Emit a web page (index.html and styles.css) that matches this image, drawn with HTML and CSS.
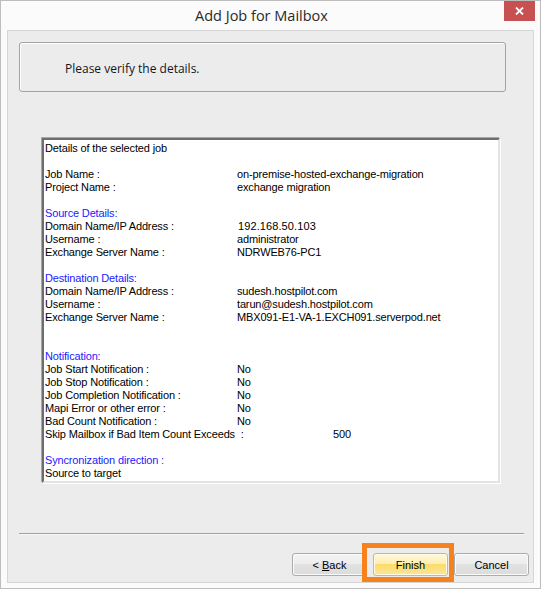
FILE: index.html
```html
<!DOCTYPE html>
<html>
<head>
<meta charset="utf-8">
<link rel="stylesheet" href="styles.css">
</head>
<body>
<div class="window">
  <div class="titlebar">
    <div class="title">Add Job for Mailbox</div>
    <div class="close">
      <svg width="9" height="8" viewBox="0 0 9 8"><path d="M1 0.5 L8 7.5 M8 0.5 L1 7.5" stroke="#fff" stroke-width="1.8" fill="none"/></svg>
    </div>
  </div>
  <div class="panel">
    <div class="header">Please verify the details.</div>
    <div class="details">
      <div class="line">Details of the selected job</div>
      <div class="line"></div>
      <div class="row"><span>Job Name :</span><span>on-premise-hosted-exchange-migration</span></div>
      <div class="row"><span>Project Name :</span><span>exchange migration</span></div>
      <div class="line"></div>
      <div class="line blue">Source Details:</div>
      <div class="row"><span>Domain Name/IP Address :</span><span class="ip">192.168.50.103</span></div>
      <div class="row"><span>Username :</span><span>administrator</span></div>
      <div class="row"><span>Exchange Server Name :</span><span>NDRWEB76-PC1</span></div>
      <div class="line"></div>
      <div class="line blue">Destination Details:</div>
      <div class="row"><span>Domain Name/IP Address :</span><span>sudesh.hostpilot.com</span></div>
      <div class="row"><span>Username :</span><span>tarun@sudesh.hostpilot.com</span></div>
      <div class="row"><span>Exchange Server Name :</span><span>MBX091-E1-VA-1.EXCH091.serverpod.net</span></div>
      <div class="line"></div>
      <div class="line"></div>
      <div class="line blue">Notification:</div>
      <div class="row"><span>Job Start Notification :</span><span>No</span></div>
      <div class="row"><span>Job Stop Notification :</span><span>No</span></div>
      <div class="row"><span>Job Completion Notification :</span><span>No</span></div>
      <div class="row"><span>Mapi Error or other error :</span><span>No</span></div>
      <div class="row"><span>Bad Count Notification :</span><span>No</span></div>
      <div class="row wide"><span>Skip Mailbox if Bad Item Count Exceeds&nbsp;&nbsp;:</span><span>500</span></div>
      <div class="line"></div>
      <div class="line blue">Syncronization direction :</div>
      <div class="line">Source to target</div>
    </div>
    <div class="separator"></div>
    <div class="buttons">
      <button class="btn back">&lt; <u>B</u>ack</button>
      <button class="btn finish">Finish<span class="highlight"></span></button>
      <button class="btn cancel">Cancel</button>
    </div>
  </div>
</div>
</body>
</html>
```

FILE: styles.css
```css
html, body {
  margin: 0;
  padding: 0;
  background: #fbfbfb;
}
.window {
  width: 541px;
  height: 589px;
  box-sizing: border-box;
  border: 1px solid #bdbdbd;
  background: #fbfbfb;
  display: flex;
  flex-direction: column;
}
.titlebar {
  height: 29px;
  display: flex;
  align-items: flex-start;
}
.title {
  flex: 1;
  text-align: center;
  padding-left: 18px;
  padding-top: 5px;
  font-family: "Open Sans", "Noto Sans", sans-serif;
  font-size: 14.5px;
  line-height: 20px;
  color: #2a2a2a;
}
.close {
  width: 31px;
  height: 20px;
  margin-right: 5px;
  background: #c75050;
  display: flex;
  align-items: center;
  justify-content: center;
}
.panel {
  margin: 0 6px 5px 6px;
  border: 1px solid #d6d6d6;
  background: #ececec;
  flex: 1;
  display: flex;
  flex-direction: column;
}
.header {
  margin: 11px 0 0 11px;
  width: 487px;
  height: 50px;
  box-sizing: border-box;
  border: 1px solid #a3a3a3;
  border-radius: 3px;
  box-shadow: inset 1px 1px 0 #ffffff;
  padding-left: 45px;
  display: flex;
  align-items: center;
  font-family: "Open Sans", "Noto Sans", sans-serif;
  font-size: 12px;
  color: #14141e;
  padding-top: 2px;
}
.details {
  margin: 46px 0 0 34px;
  width: 458px;
  height: 345px;
  box-sizing: border-box;
  background: #ffffff;
  border-top: 2px solid #6d6d6d;
  border-left: 2px solid #6d6d6d;
  border-right: 2px solid #e3e3e3;
  border-bottom: 2px solid #e3e3e3;
  box-shadow: -1px -1px 0 #a8a8a8, 1px 1px 0 #ffffff;
  padding: 2px 0 0 1px;
  font-family: "Liberation Sans", Arial, sans-serif;
  font-size: 11px;
  letter-spacing: -0.15px;
  line-height: 13px;
  color: #000;
}
.line {
  height: 13px;
  white-space: nowrap;
}
.blue {
  color: #1a1aff;
}
.row {
  height: 13px;
  display: grid;
  grid-template-columns: 192px auto;
  white-space: nowrap;
}
.row.wide {
  grid-template-columns: 288px auto;
}
.ip {
  padding-left: 1px;
  letter-spacing: 0.1px;
}
.separator {
  margin: 50px 0 0 11px;
  width: 505px;
  height: 1px;
  background: #a0a0a0;
  box-shadow: 0 1px 0 #f8f8f8;
}
.buttons {
  margin-top: 19px;
  display: flex;
  justify-content: flex-end;
  gap: 6px;
  padding-right: 4px;
}
.btn {
  position: relative;
  width: 75px;
  height: 23px;
  box-sizing: border-box;
  border: 1px solid #acacac;
  border-radius: 3px;
  background: linear-gradient(#f4f4f4 0%, #ececec 50%, #e1e1e1 50%, #dcdcdc 100%);
  box-shadow: inset 0 0 0 1px #fbfbfb;
  font-family: "Liberation Sans", Arial, sans-serif;
  font-size: 11px;
  color: #000;
  padding: 0;
  margin: 0;
}
.btn u {
  text-decoration: underline;
}
.finish {
  border-color: #d9b95a;
  background: linear-gradient(#fff8d8 0%, #fdeeb0 50%, #fbdc6c 50%, #fde596 100%);
  box-shadow: inset 0 0 0 1px #fffbe8;
}
.highlight {
  position: absolute;
  left: -12px;
  top: -11px;
  width: 92px;
  height: 39px;
  box-sizing: border-box;
  border: 5px solid #f5821f;
  pointer-events: none;
}
```
